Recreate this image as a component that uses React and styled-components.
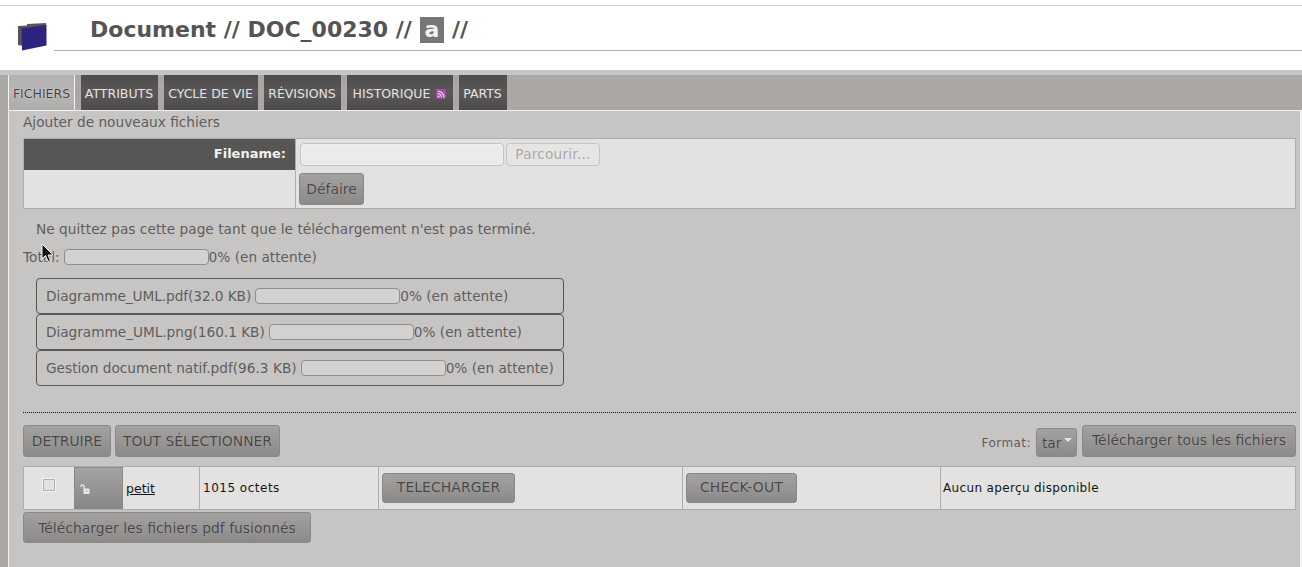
import React from 'react';
import styled, { createGlobalStyle } from 'styled-components';

const Global = createGlobalStyle`
  html, body { margin: 0; padding: 0; height: 100%; overflow: hidden; background: #c6c5c3; }
  body { font-family: "DejaVu Sans", sans-serif; font-size: 13.7px; color: #5a5858; }
  * { box-sizing: border-box; }
`;

const Page = styled.div`
  position: relative;
  width: 1302px;
  height: 567px;
  overflow: hidden;
  display: flex;
  flex-direction: column;
  background: #c6c5c3;
`;

const Header = styled.header`
  height: 70px;
  flex: none;
  background: #fff;
  padding-top: 5px;
`;

const HeaderInner = styled.div`
  height: 46px;
  border-top: 1px solid #cfcfcd;
  display: flex;
  padding-left: 17px;
`;

const LogoBox = styled.div`
  width: 37px;
  flex: none;
  padding-top: 15px;
`;

const TitleBar = styled.div`
  flex: 1;
  border-bottom: 1px solid #aeaeae;
  padding: 3px 0 0 36px;
  display: flex;
  align-items: center;
  gap: 8px;
  font-size: 22px;
  font-weight: bold;
  color: #555353;
  height: 45px;
  white-space: pre;
`;

const Badge = styled.span`
  width: 24px;
  height: 26px;
  background: #777675;
  color: #f2f2f2;
  display: flex;
  align-items: center;
  justify-content: center;
`;

const Body = styled.main`
  flex: 1;
  padding-top: 5px;
  display: flex;
  flex-direction: column;
  min-height: 0;
`;

const Shell = styled.div`
  flex: 1;
  display: flex;
  flex-direction: column;
  background: #aaa7a5;
  padding-left: 8px;
  min-height: 0;
`;

const TabBar = styled.nav`
  height: 35px;
  flex: none;
  display: flex;
  gap: 6px;
  border-left: 1px solid #f4f4f4;
`;

const Tab = styled.a`
  width: ${p => p.$w}px;
  height: 35px;
  display: flex;
  align-items: center;
  justify-content: center;
  gap: 6px;
  padding: 2px ${p => (p.$active ? 0 : 1)}px 0 0;
  font-size: 12.5px;
  white-space: nowrap;
  color: ${p => (p.$active ? '#3e3c3c' : '#e4e3e3')};
  background: ${p =>
    p.$active
      ? 'linear-gradient(#b4b2b0, #b9b7b5 50%, #aeacaa)'
      : 'linear-gradient(#4d4b4b, #5a5858 50%, #4c4a4a)'};
  border-right: ${p => (p.$active ? '1px solid #f4f4f4' : '0')};
  text-shadow: ${p => (p.$active ? '0 0 1px #fff' : 'none')};
`;

const Content = styled.section`
  flex: 1;
  background: #c6c5c3;
  border: 1px solid #f1f1f0;
  border-right-width: 2px;
  border-bottom: 0;
  padding: 3px 4px 0 14px;
  min-height: 0;
`;

const SectionTitle = styled.div`
  height: 24px;
  line-height: 17px;
  color: #5f5d5d;
`;

const FormTable = styled.div`
  border: 1px solid #aeadab;
  background: #e3e2e0;
  display: grid;
  grid-template-columns: 272px 1fr;
  grid-template-rows: 31px 38px;
`;

const LabelCell = styled.div`
  background: ${p => (p.$dark ? '#585555' : 'transparent')};
  color: #f1f1f1;
  font-weight: bold;
  font-size: 13px;
  text-align: right;
  padding: 7px 9px 0 0;
  border-right: 1px solid #aeadab;
`;

const FieldCell = styled.div`
  display: flex;
  align-items: ${p => (p.$end ? 'center' : 'flex-start')};
  gap: 2px;
  padding: ${p => (p.$end ? '0 3px' : '4px 4px 0')};
`;

const FileInput = styled.div`
  width: 204px;
  height: 23px;
  background: #ecebe9;
  border: 1px solid #c3c2c0;
  border-radius: 4px;
  box-shadow: 0 0 0 1px #f0f0ee inset;
`;

const BrowseButton = styled.div`
  width: 94px;
  height: 23px;
  background: #e6e5e3;
  border: 1px solid #c6c5c3;
  border-radius: 4px;
  color: #aaa9a8;
  font-size: 13.6px;
  letter-spacing: .25px;
  line-height: 20px;
  text-align: center;
`;

const Btn = styled.button`
  font: inherit;
  font-size: 13.9px;
  letter-spacing: ${p => p.$track || 0}px;
  width: ${p => p.$w}px;
  height: ${p => p.$h || 32}px;
  padding: 0 0 ${p => p.$lift || 0}px;
  flex: none;
  color: #474545;
  white-space: nowrap;
  background: linear-gradient(#a3a2a0, #8b8a89);
  border: 1px solid #8a8988;
  border-radius: 3px;
  text-shadow: 0 0 1px #bbb;
`;

const Notice = styled.div`
  padding: 11px 0 0 13px;
  height: 35px;
  line-height: 18px;
  letter-spacing: .03px;
  color: #5f5d5d;
`;

const ProgressRow = styled.div`
  display: flex;
  align-items: center;
  white-space: pre;
  height: 16px;
`;

const TotalRow = styled(ProgressRow)`
  margin-top: 5px;
  color: #5f5d5d;
`;

const ProgressTrack = styled.div`
  width: 145px;
  height: 16px;
  flex: none;
  background: #d3d2d0;
  border: 1px solid #8f8e8c;
  border-radius: 4px;
  margin-left: 4px;
`;

const FileList = styled.div`
  margin: 13px 0 0 13px;
  width: 528px;
  display: flex;
  flex-direction: column;
`;

const FileItem = styled.div`
  height: 36px;
  border: 1px solid #575555;
  border-radius: 4px;
  padding-left: 9px;
  display: flex;
  align-items: center;
  white-space: pre;
  color: #5f5d5d;
`;

const FileName = styled.span`
  letter-spacing: ${p => p.$track}px;
`;

const Divider = styled.hr`
  margin: 26px 0 0;
  border: 0;
  border-top: 1px dotted #111;
  height: 1px;
`;

const Toolbar = styled.div`
  display: flex;
  justify-content: space-between;
  margin-top: 12px;
  height: 32px;
`;

const Group = styled.div`
  display: flex;
  gap: 4px;
`;

const RightGroup = styled(Group)`
  align-items: flex-end;
  gap: 5px;
`;

const FormatLabel = styled.span`
  font-size: 12px;
  color: #5f5d5d;
  align-self: center;
  padding-top: 3px;
  letter-spacing: .45px;
`;

const SelectBox = styled.div`
  width: 41px;
  height: 29px;
  background: linear-gradient(#a3a2a0, #8b8a89);
  border: 1px solid #8a8988;
  border-radius: 3px;
  display: flex;
  align-items: center;
  padding-left: 5px;
  gap: 3px;
  color: #474545;
  text-shadow: 0 0 1px #bbb;
`;

const Caret = styled.span`
  width: 0;
  height: 0;
  margin-top: -5px;
  border-left: 4px solid transparent;
  border-right: 4px solid transparent;
  border-top: 4px solid #e6e6e6;
`;

const FilesTable = styled.div`
  margin-top: 9px;
  height: 44px;
  background: #e3e2e0;
  border: 1px solid #aeadab;
  display: grid;
  grid-template-columns: 50px 49px 77px 179px 304px 258px 1fr;
  font-size: 12px;
  color: #151515;
`;

const Cell = styled.div`
  display: flex;
  align-items: center;
  padding-left: ${p => p.$pl || 0}px;
  border-right: ${p => (p.$noline ? '0' : '1px solid #aeadab')};
  letter-spacing: ${p => p.$track || 0.35}px;
`;

const CheckCell = styled.div`
  padding: 12px 0 0 19px;
`;

const CheckBox = styled.div`
  width: 12px;
  height: 12px;
  background: #e3e2e0;
  border: 1px solid #b0afad;
  box-shadow: 0 0 0 1px #f3f3f2;
`;

const ThumbCell = styled.div`
  background: linear-gradient(#a5a4a2, #878684);
  border: 1px solid #8a8987;
  border-bottom: 0;
  padding: 16px 0 0 5px;
`;

const Link = styled.a`
  color: #151515;
  text-decoration: underline;
  font-size: 12.5px;
  letter-spacing: 0;
`;

const MergeRow = styled.div`
  margin-top: 2px;
`;

const Pointer = styled.svg`
  position: absolute;
  left: 41px;
  top: 243px;
`;

const Logo = () => (
  <svg width="30" height="30" viewBox="0 0 30 30">
    <path d="M1 5 L10 4.500 L10 3 L29 2 V20 L14 26 L1 24 Z" fill="#585655" />
    <path d="M4.500 10 L29.500 6.500 V27 L5 32 Z" fill="#2d2380" transform="translate(0 -2.500)" />
  </svg>
);

const Lock = () => (
  <svg width="12" height="11" viewBox="0 0 12 11" style={{ display: 'block' }}>
    <path d="M1 3 V2 Q1 1 2 1 H3 Q4 1 4 2 V5" fill="none" stroke="#e8e8e8" strokeWidth="1.300" />
    <rect x="3.500" y="4.500" width="6" height="5.500" fill="#e8e8e8" />
    <rect x="6" y="6.500" width="1.500" height="1.500" fill="#b5b4b2" />
  </svg>
);

const Rss = () => (
  <svg width="10" height="10" viewBox="0 0 10 10">
    <rect width="10" height="10" rx="1" fill="#a64aa8" />
    <circle cx="2.500" cy="7.500" r="1" fill="#efdff0" />
    <path d="M1.500 4.500 A4 4 0 0 1 5.500 8.500 M1.500 2 A6.500 6.500 0 0 1 8 8.500" fill="none" stroke="#efdff0" strokeWidth="1.200" />
  </svg>
);

const files = [
  { name: 'Diagramme_UML.pdf(32.0 KB)', track: -0.08 },
  { name: 'Diagramme_UML.png(160.1 KB)', track: -0.04 },
  { name: 'Gestion document natif.pdf(96.3 KB)', track: 0 },
];

export default function App() {
  return (
    <Page>
      <Global />
      <Header>
        <HeaderInner>
          <LogoBox><Logo /></LogoBox>
          <TitleBar>
            <span>Document // DOC_00230 //</span>
            <Badge>a</Badge>
            <span>//</span>
          </TitleBar>
        </HeaderInner>
      </Header>
      <Body>
        <Shell>
          <TabBar>
            <Tab $active $w={66}>FICHIERS</Tab>
            <Tab $w={77}>ATTRIBUTS</Tab>
            <Tab $w={94}>CYCLE DE VIE</Tab>
            <Tab $w={77}>RÉVISIONS</Tab>
            <Tab $w={106}>HISTORIQUE <Rss /></Tab>
            <Tab $w={48}>PARTS</Tab>
          </TabBar>
          <Content>
            <SectionTitle>Ajouter de nouveaux fichiers</SectionTitle>
            <FormTable>
              <LabelCell $dark>Filename:</LabelCell>
              <FieldCell>
                <FileInput />
                <BrowseButton>Parcourir...</BrowseButton>
              </FieldCell>
              <LabelCell />
              <FieldCell $end><Btn $w={65}>Défaire</Btn></FieldCell>
            </FormTable>
            <Notice>Ne quittez pas cette page tant que le téléchargement n'est pas terminé.</Notice>
            <TotalRow>Total:<ProgressTrack />0% (en attente)</TotalRow>
            <FileList>
              {files.map(f => (
                <FileItem key={f.name}>
                  <FileName $track={f.track}>{f.name}</FileName>
                  <ProgressTrack />0% (en attente)
                </FileItem>
              ))}
            </FileList>
            <Divider />
            <Toolbar>
              <Group>
                <Btn $w={88}>DETRUIRE</Btn>
                <Btn $w={165}>TOUT SÉLECTIONNER</Btn>
              </Group>
              <RightGroup>
                <FormatLabel>Format:</FormatLabel>
                <SelectBox>tar<Caret /></SelectBox>
                <Btn $w={214} $lift={2}>Télécharger tous les fichiers</Btn>
              </RightGroup>
            </Toolbar>
            <FilesTable>
              <CheckCell><CheckBox /></CheckCell>
              <ThumbCell><Lock /></ThumbCell>
              <Cell $pl={3}><Link>petit</Link></Cell>
              <Cell $pl={3} $track={0.5}>1015 octets</Cell>
              <Cell $pl={3}><Btn $w={133} $h={30} $lift={2} $track={0.1}>TELECHARGER</Btn></Cell>
              <Cell $pl={3}><Btn $w={111} $h={30} $lift={2} $track={0.2}>CHECK-OUT</Btn></Cell>
              <Cell $pl={2} $noline>Aucun aperçu disponible</Cell>
            </FilesTable>
            <MergeRow><Btn $w={288} $h={31}>Télécharger les fichiers pdf fusionnés</Btn></MergeRow>
          </Content>
        </Shell>
      </Body>
      <Pointer width="14" height="21" viewBox="0 0 14 21">
        <path d="M1 1 V16 L4.500 12.500 L7 18.500 L9.500 17.500 L7 12 H12 Z" fill="#111" stroke="#f4f4f4" strokeWidth="1" />
      </Pointer>
    </Page>
  );
}
